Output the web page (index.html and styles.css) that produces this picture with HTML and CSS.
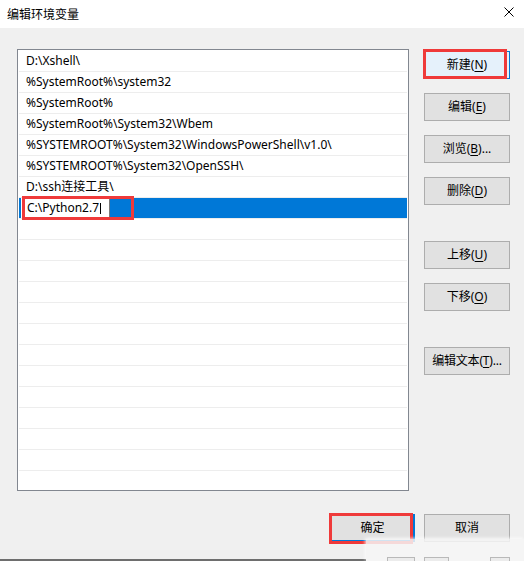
FILE: index.html
```html
<!DOCTYPE html>
<html lang="zh">
<head>
<meta charset="utf-8">
<title>编辑环境变量</title>
<link rel="stylesheet" href="styles.css">
</head>
<body>
<div class="window">
  <div class="titlebar">
    <span class="title">编辑环境变量</span>
    <svg class="close" width="10" height="10" viewBox="0 0 10 10"><path d="M0.5 0.5 L9.5 9.5 M9.5 0.5 L0.5 9.5" stroke="#000" stroke-width="1" fill="none"/></svg>
  </div>
  <div class="content">
    <div class="list">
      <div class="row">D:\Xshell\</div>
      <div class="row">%SystemRoot%\system32</div>
      <div class="row">%SystemRoot%</div>
      <div class="row">%SystemRoot%\System32\Wbem</div>
      <div class="row">%SYSTEMROOT%\System32\WindowsPowerShell\v1.0\</div>
      <div class="row">%SYSTEMROOT%\System32\OpenSSH\</div>
      <div class="row">D:\ssh连接工具\</div>
      <div class="row selected"><span class="edit">C:\Python2.7<span class="caret"></span></span></div>
      <div class="row"></div>
      <div class="row"></div>
      <div class="row"></div>
      <div class="row"></div>
      <div class="row"></div>
      <div class="row"></div>
      <div class="row"></div>
      <div class="row"></div>
      <div class="row"></div>
      <div class="row"></div>
      <div class="row"></div>
      <div class="row"></div>
      <div class="row"></div>
    </div>
    <div class="side">
      <button class="btn focus">新建(<u>N</u>)</button>
      <button class="btn">编辑(<u>E</u>)</button>
      <button class="btn">浏览(<u>B</u>)...</button>
      <button class="btn">删除(<u>D</u>)</button>
      <button class="btn move-up">上移(<u>U</u>)</button>
      <button class="btn">下移(<u>O</u>)</button>
      <button class="btn edit-text">编辑文本(<u>T</u>)...</button>
    </div>
  </div>
  <div class="footer">
    <button class="btn default">确定</button>
    <button class="btn">取消</button>
  </div>

  <div class="mark mark-edit"></div>
  <div class="mark mark-new"></div>
  <div class="mark mark-ok"></div>

  <div class="under-line"></div>
  <div class="under-patch"></div>
  <div class="under-box b1"></div>
  <div class="under-box b2"></div>
  <div class="under-box b3"></div>
</div>
</body>
</html>
```

FILE: styles.css
```css
html, body {
  margin: 0;
  padding: 0;
}
body {
  background: #f0f0f0;
  font-family: "Noto Sans", "Noto Sans CJK SC", sans-serif;
  font-size: 12px;
  color: #000;
}
.window {
  position: relative;
  width: 524px;
  height: 561px;
  overflow: hidden;
  background: #f0f0f0;
}
.titlebar {
  height: 28px;
  background: #fff;
  display: flex;
  align-items: center;
  justify-content: space-between;
  padding: 0 10px 0 7px;
}
.title {
  font-family: "Noto Sans CJK SC", sans-serif;
  font-size: 12px;
  line-height: 16px;
}
.close {
  display: block;
  margin-top: -4px;
}
.content {
  display: flex;
  align-items: flex-start;
  padding: 21px 0 0 17px;
}
.list {
  box-sizing: border-box;
  width: 392px;
  height: 442px;
  border: 1px solid #828790;
  background: #fff;
  padding: 1px;
  overflow: hidden;
}
.row {
  height: 20px;
  line-height: 20px;
  border-bottom: 1px solid #ededed;
  padding-left: 7px;
  white-space: nowrap;
}
.row.selected {
  background: #0078d7;
  padding-left: 0;
  display: flex;
  border-bottom-color: #ededed;
}
.edit {
  display: flex;
  align-items: center;
  box-sizing: border-box;
  margin-left: 2px;
  width: 89px;
  height: 20px;
  background: #fff;
  border-right: 1px solid #7a7a7a;
  padding-left: 6px;
}
.caret {
  display: inline-block;
  width: 1px;
  height: 11px;
  background: #000;
  margin-left: 1px;
}
.side {
  display: flex;
  flex-direction: column;
  margin-left: 15px;
  padding-top: 2px;
  gap: 14px;
}
.btn {
  box-sizing: border-box;
  width: 86px;
  height: 28px;
  margin: 0;
  padding: 0;
  background: #e1e1e1;
  border: 1px solid #adadad;
  font-family: "Noto Sans", "Noto Sans CJK SC", sans-serif;
  font-size: 12px;
  color: #000;
  line-height: 16px;
}
.btn u {
  text-underline-offset: 2px;
}
.btn.focus {
  background: #e5f1fb;
  border-color: #0078d7;
}
.side .move-up {
  margin-top: 22px;
}
.side .edit-text {
  margin-top: 22px;
  letter-spacing: -0.2px;
}
.footer {
  display: flex;
  justify-content: flex-end;
  gap: 9px;
  padding: 23px 14px 0 0;
}
.btn.default {
  width: 85px;
  border: 2px solid #0078d7;
}
.mark {
  position: absolute;
  box-sizing: border-box;
  border: 3px solid #ef3a3a;
}
.mark-edit {
  left: 22px;
  top: 196px;
  width: 112px;
  height: 24px;
}
.mark-new {
  left: 423px;
  top: 49px;
  width: 84px;
  height: 30px;
}
.mark-ok {
  left: 329px;
  top: 513px;
  width: 84px;
  height: 31px;
}
.under-line {
  position: absolute;
  left: 0;
  top: 559px;
  width: 366px;
  height: 2px;
  background: #6e6e6e;
}
.under-patch {
  position: absolute;
  left: 366px;
  top: 539px;
  right: 0;
  bottom: 0;
  background: rgba(246, 246, 246, 0.85);
  box-shadow: -1px -1px 3px rgba(255, 255, 255, 0.8);
}
.under-box {
  position: absolute;
  box-sizing: border-box;
  top: 557px;
  height: 6px;
  border: 1px solid #b9b9b9;
  background: #ececec;
}
.b1 { left: 387px; width: 28px; }
.b2 { left: 424px; width: 25px; }
.b3 { left: 490px; width: 20px; }
```
